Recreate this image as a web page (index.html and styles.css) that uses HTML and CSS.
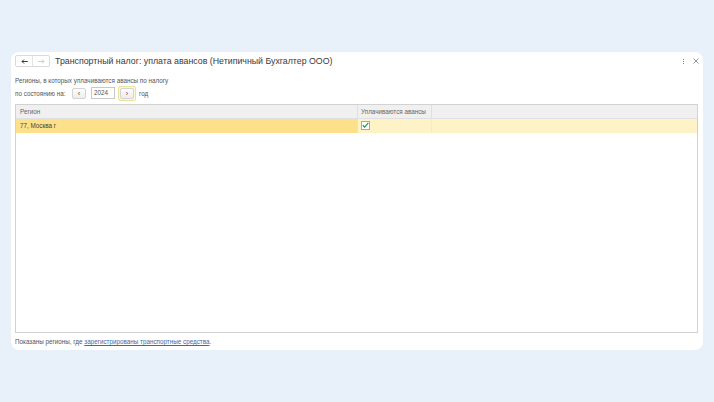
FILE: index.html
```html
<!DOCTYPE html>
<html lang="ru">
<head>
<meta charset="utf-8">
<title>Транспортный налог</title>
<link rel="stylesheet" href="styles.css">
</head>
<body>
<div class="card">
  <div class="head">
    <div class="nav">
      <span class="navbtn back"><svg width="7" height="5" viewBox="0 0 7 5"><path d="M6.8 2.5H1M3 0.5L1 2.5l2 2" fill="none" stroke="#3a3a3a" stroke-width="1"/></svg></span>
      <span class="navbtn fwd"><svg width="7" height="5" viewBox="0 0 7 5"><path d="M0.2 2.5H6M4 0.5l2 2-2 2" fill="none" stroke="#c8c8c8" stroke-width="0.9"/></svg></span>
    </div>
    <h1 class="title">Транспортный налог: уплата авансов (Нетипичный Бухгалтер ООО)</h1>
    <div class="tools">
      <span class="more"><i></i><i></i><i></i></span>
      <svg class="close" width="6" height="6" viewBox="0 0 6 6"><path d="M0.5 0.5l5 5M5.5 0.5l-5 5" stroke="#8a8a8a" stroke-width="0.9"/></svg>
    </div>
  </div>
  <div class="caption">Регионы, в которых уплачиваются авансы по налогу</div>
  <div class="daterow">
    <span class="lbl">по состоянию на:</span>
    <span class="step">‹</span>
    <span class="year">2024</span>
    <span class="focus"><span class="step">›</span></span>
    <span class="lbl">год</span>
  </div>
  <div class="table">
    <div class="thead">
      <div class="c1">Регион</div>
      <div class="c2">Уплачиваются авансы</div>
      <div class="c3"></div>
    </div>
    <div class="row sel">
      <div class="c1">77, Москва г</div>
      <div class="c2"><span class="chk"><svg width="7" height="6" viewBox="0 0 7 6"><path d="M0.8 3.2l1.9 1.9L6.3 0.8" fill="none" stroke="#1d9a5c" stroke-width="1.3"/></svg></span></div>
      <div class="c3"></div>
    </div>
  </div>
  <div class="foot">Показаны регионы, где <a href="#">зарегистрированы транспортные средства</a>.</div>
</div>
</body>
</html>
```
FILE: styles.css
```css
html, body {
  margin: 0;
  padding: 0;
}
body {
  width: 714px;
  height: 402px;
  background: #e8f1fa;
  font-family: "Liberation Sans", Arial, sans-serif;
  color: #4a4a4a;
  padding-top: 52px;
  box-sizing: border-box;
}
.card {
  margin-left: 11px;
  width: 692px;
  height: 298px;
  background: #fff;
  border-radius: 8px;
  box-sizing: border-box;
  padding: 3px 5px 0 4px;
  display: flex;
  flex-direction: column;
}
.head {
  display: flex;
  align-items: center;
  height: 12px;
}
.nav {
  display: flex;
  border: 1px solid #dadada;
  border-radius: 2px;
  height: 12px;
  box-sizing: border-box;
}
.navbtn {
  width: 16px;
  display: flex;
  align-items: center;
  justify-content: center;
}
.navbtn.back {
  border-right: 1px solid #e4e4e4;
}
.title {
  margin: 0 0 0 5px;
  font-weight: normal;
  font-size: 8.8px;
  color: #3a3a3a;
  flex: 1;
  white-space: nowrap;
}
.tools {
  display: flex;
  align-items: center;
  gap: 9px;
  margin-right: -1px;
}
.more {
  display: flex;
  flex-direction: column;
  gap: 1px;
}
.more i {
  width: 1px;
  height: 1px;
  background: #888;
  display: block;
}
.caption {
  font-size: 6.3px;
  color: #555;
  margin-top: 10px;
  height: 8px;
  line-height: 8px;
}
.daterow {
  display: flex;
  align-items: center;
  height: 16px;
  font-size: 6.3px;
  color: #555;
}
.lbl {
  white-space: nowrap;
}
.daterow .lbl:first-child {
  width: 57px;
}
.step {
  width: 14px;
  height: 11px;
  box-sizing: border-box;
  border: 1px solid #d4d4d4;
  border-radius: 2px;
  background: linear-gradient(#fdfdfd, #ededed);
  display: flex;
  align-items: center;
  justify-content: center;
  font-size: 7px;
  color: #444;
}
.year {
  margin-left: 5px;
  width: 24px;
  height: 12px;
  box-sizing: border-box;
  border: 1px solid #c8c8c8;
  padding-left: 2px;
  line-height: 10px;
  color: #555;
}
.focus {
  margin-left: 3px;
  padding: 1px;
  border: 1px solid #e9e2a2;
  background: #fbf6d6;
  border-radius: 2px;
  margin-right: 3px;
}
.table {
  margin-top: 3px;
  flex: 1;
  border: 1px solid #d2d2d2;
  max-height: 229px;
  box-sizing: border-box;
}
.thead, .row {
  display: flex;
  font-size: 6.3px;
}
.thead {
  height: 13px;
  background: #f0f0f0;
  border-bottom: 1px solid #e0e0e0;
  color: #666;
  line-height: 13px;
}
.row {
  height: 14px;
  line-height: 14px;
  color: #444;
}
.c1 {
  width: 342px;
  padding-left: 4px;
  box-sizing: border-box;
  border-right: 1px solid #e0e0e0;
}
.c2 {
  width: 74px;
  padding-left: 3px;
  box-sizing: border-box;
  border-right: 1px solid #e0e0e0;
}
.c3 {
  flex: 1;
}
.row.sel {
  background: #fdf3c6;
}
.row.sel .c1 {
  background: #fce08a;
  border-right-color: #f3e4a8;
}
.row.sel .c2 {
  border-right-color: #f8ecbd;
  display: flex;
  align-items: center;
}
.chk {
  width: 7px;
  height: 7px;
  border: 1px solid #a8a8a8;
  background: #fff;
  display: flex;
  align-items: center;
  justify-content: center;
  position: relative;
  top: -1px;
}
.foot {
  font-size: 6.3px;
  color: #555;
  height: 17px;
  line-height: 17px;
}
.foot a {
  color: #3f6aa6;
  text-decoration: underline;
}
```
